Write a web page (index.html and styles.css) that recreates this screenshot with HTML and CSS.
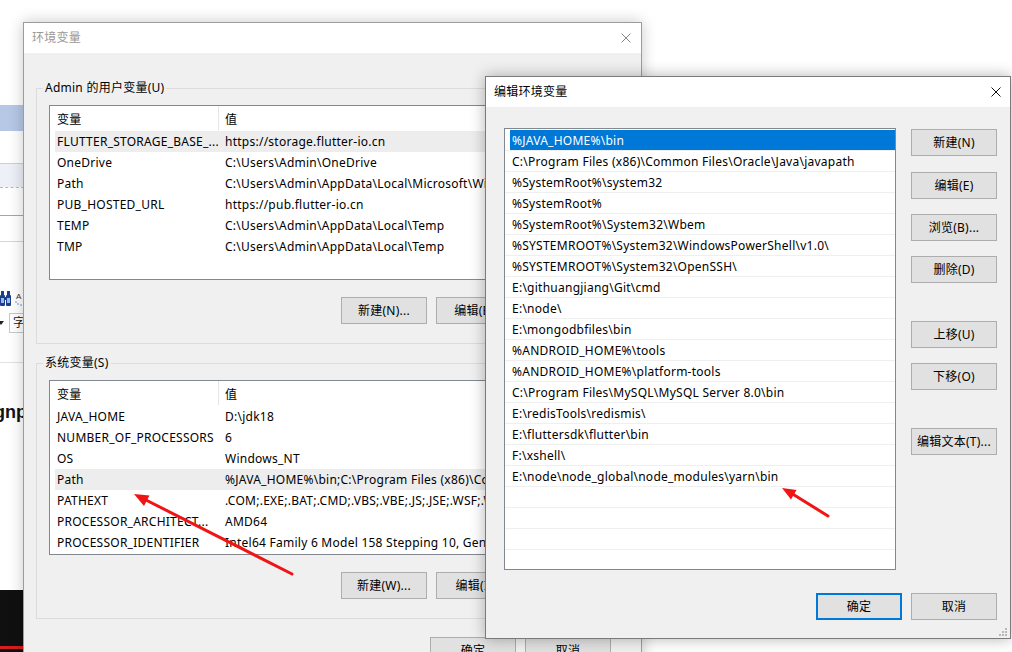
FILE: index.html
```html
<!DOCTYPE html>
<html lang="zh-CN">
<head>
<meta charset="utf-8">
<title>环境变量</title>
<link rel="stylesheet" href="styles.css">
</head>
<body>
<div class="desktop">

  <div class="bgapp">
    <div class="bg-sel"></div>
    <div class="bg-line1"></div>
    <div class="bg-pale"></div>
    <div class="bg-dash"></div>
    <div class="bg-line2"></div>
    <div class="bg-line3"></div>
    <div class="bg-tools">
      <svg width="24" height="16" viewBox="0 0 24 16">
        <rect x="0" y="4" width="5" height="11" rx="1" fill="#1c3f8c"/>
        <rect x="6" y="4" width="5" height="11" rx="1" fill="#1c3f8c"/>
        <rect x="1" y="7" width="3" height="5" fill="#9bb8ea"/>
        <rect x="7" y="7" width="3" height="5" fill="#9bb8ea"/>
        <rect x="1" y="0" width="3" height="5" fill="#1c3f8c"/>
        <rect x="7" y="0" width="3" height="5" fill="#1c3f8c"/>
        <rect x="4" y="6" width="3" height="3" fill="#1c3f8c"/>
        <text x="16" y="8" font-size="8" fill="#333" font-family="Liberation Sans, sans-serif">A</text>
        <circle cx="16" cy="11" r="0.7" fill="#3a6fd8"/>
        <circle cx="18" cy="13" r="0.7" fill="#3a6fd8"/>
        <circle cx="21" cy="14" r="0.7" fill="#3a6fd8"/>
      </svg>
    </div>
    <div class="bg-combo">
      <span class="bg-caret"></span>
      <span class="bg-box">字</span>
    </div>
    <div class="bg-line4"></div>
    <div class="bg-bold">gnpm</div>
    <div class="bg-black"></div>
  </div>

  <div class="dlg dlg-env">
    <div class="titlebar">
      <span class="title-text">环境变量</span>
      <svg class="close" width="10" height="10" viewBox="0 0 10 10"><path d="M0.5 0.5 L9.5 9.5 M9.5 0.5 L0.5 9.5" stroke="#888" stroke-width="1" fill="none"/></svg>
    </div>
    <div class="env-body">
      <fieldset class="gb">
        <legend>Admin 的用户变量(U)</legend>
        <div class="gb-inner">
          <div class="lv">
            <div class="lv-head"><span class="h1">变量</span><span class="h2">值</span></div>
            <div class="lv-rows">
              <div class="lv-row hl"><span class="c1">FLUTTER_STORAGE_BASE_...</span><span class="c2">https://storage.flutter-io.cn</span></div>
              <div class="lv-row"><span class="c1">OneDrive</span><span class="c2">C:\Users\Admin\OneDrive</span></div>
              <div class="lv-row"><span class="c1">Path</span><span class="c2">C:\Users\Admin\AppData\Local\Microsoft\WindowsApps;</span></div>
              <div class="lv-row"><span class="c1">PUB_HOSTED_URL</span><span class="c2">https://pub.flutter-io.cn</span></div>
              <div class="lv-row"><span class="c1">TEMP</span><span class="c2">C:\Users\Admin\AppData\Local\Temp</span></div>
              <div class="lv-row"><span class="c1">TMP</span><span class="c2">C:\Users\Admin\AppData\Local\Temp</span></div>
            </div>
          </div>
          <div class="btn-row">
            <button class="btn">新建(N)...</button>
            <button class="btn">编辑(E)...</button>
            <button class="btn">删除(D)</button>
          </div>
        </div>
      </fieldset>

      <fieldset class="gb gb2">
        <legend>系统变量(S)</legend>
        <div class="gb-inner">
          <div class="lv">
            <div class="lv-head"><span class="h1">变量</span><span class="h2">值</span></div>
            <div class="lv-rows">
              <div class="lv-row"><span class="c1">JAVA_HOME</span><span class="c2">D:\jdk18</span></div>
              <div class="lv-row"><span class="c1">NUMBER_OF_PROCESSORS</span><span class="c2">6</span></div>
              <div class="lv-row"><span class="c1">OS</span><span class="c2">Windows_NT</span></div>
              <div class="lv-row hl"><span class="c1">Path</span><span class="c2">%JAVA_HOME%\bin;C:\Program Files (x86)\Common Files\Oracle\Java\javapath;</span></div>
              <div class="lv-row"><span class="c1">PATHEXT</span><span class="c2">.COM;.EXE;.BAT;.CMD;.VBS;.VBE;.JS;.JSE;.WSF;.WSH;.MSC</span></div>
              <div class="lv-row"><span class="c1">PROCESSOR_ARCHITECT...</span><span class="c2">AMD64</span></div>
              <div class="lv-row"><span class="c1">PROCESSOR_IDENTIFIER</span><span class="c2">Intel64 Family 6 Model 158 Stepping 10, GenuineIntel</span></div>
            </div>
          </div>
          <div class="btn-row">
            <button class="btn">新建(W)...</button>
            <button class="btn">编辑(I)...</button>
            <button class="btn">删除(L)</button>
          </div>
        </div>
      </fieldset>

      <div class="env-foot">
        <button class="btn">确定</button>
        <button class="btn">取消</button>
      </div>
    </div>
  </div>

  <div class="dlg dlg-edit">
    <div class="titlebar">
      <span class="title-text active">编辑环境变量</span>
      <svg class="close close-r" width="10" height="10" viewBox="0 0 10 10"><path d="M0.5 0.5 L9.5 9.5 M9.5 0.5 L0.5 9.5" stroke="#111" stroke-width="1" fill="none"/></svg>
    </div>
    <div class="edit-body">
      <div class="edit-main">
        <div class="elist">
          <div class="er sel"><span class="t">%JAVA_HOME%\bin</span></div>
          <div class="er"><span class="t">C:\Program Files (x86)\Common Files\Oracle\Java\javapath</span></div>
          <div class="er"><span class="t">%SystemRoot%\system32</span></div>
          <div class="er"><span class="t">%SystemRoot%</span></div>
          <div class="er"><span class="t">%SystemRoot%\System32\Wbem</span></div>
          <div class="er"><span class="t">%SYSTEMROOT%\System32\WindowsPowerShell\v1.0\</span></div>
          <div class="er"><span class="t">%SYSTEMROOT%\System32\OpenSSH\</span></div>
          <div class="er"><span class="t">E:\githuangjiang\Git\cmd</span></div>
          <div class="er"><span class="t">E:\node\</span></div>
          <div class="er"><span class="t">E:\mongodbfiles\bin</span></div>
          <div class="er"><span class="t">%ANDROID_HOME%\tools</span></div>
          <div class="er"><span class="t">%ANDROID_HOME%\platform-tools</span></div>
          <div class="er"><span class="t">C:\Program Files\MySQL\MySQL Server 8.0\bin</span></div>
          <div class="er"><span class="t">E:\redisTools\redismis\</span></div>
          <div class="er"><span class="t">E:\fluttersdk\flutter\bin</span></div>
          <div class="er"><span class="t">F:\xshell\</span></div>
          <div class="er"><span class="t">E:\node\node_global\node_modules\yarn\bin</span></div>
          <div class="er"><span class="t"></span></div>
          <div class="er"><span class="t"></span></div>
          <div class="er"><span class="t"></span></div>
          <div class="er"><span class="t"></span></div>
        </div>
        <div class="ebtns">
          <button class="btn first">新建(N)</button>
          <button class="btn gap-m">编辑(E)</button>
          <button class="btn gap-s">浏览(B)...</button>
          <button class="btn gap-s">删除(D)</button>
          <button class="btn gap-l">上移(U)</button>
          <button class="btn gap-s">下移(O)</button>
          <button class="btn gap-l">编辑文本(T)...</button>
        </div>
      </div>
      <div class="edit-foot">
        <button class="btn default">确定</button>
        <button class="btn">取消</button>
      </div>
    </div>
    <svg class="grip" width="10" height="9" viewBox="0 0 10 9">
      <rect x="7" y="0" width="2" height="2" fill="#b8b8b8"/>
      <rect x="4" y="3" width="2" height="2" fill="#b8b8b8"/>
      <rect x="7" y="3" width="2" height="2" fill="#b8b8b8"/>
      <rect x="1" y="6" width="2" height="2" fill="#b8b8b8"/>
      <rect x="4" y="6" width="2" height="2" fill="#b8b8b8"/>
      <rect x="7" y="6" width="2" height="2" fill="#b8b8b8"/>
    </svg>
  </div>

  <svg class="arrows" width="1012" height="652" viewBox="0 0 1012 652">
    <line x1="292" y1="574" x2="144" y2="499" stroke="#f01414" stroke-width="3" stroke-linecap="round"/>
    <polygon points="134,494 149.5,495.5 144,506" fill="#f01414"/>
    <line x1="828" y1="516" x2="791" y2="493" stroke="#f01414" stroke-width="3" stroke-linecap="round"/>
    <polygon points="782,488 796.5,490 791,499.5" fill="#f01414"/>
  </svg>
</div>
</body>
</html>
```

FILE: styles.css
```css
html, body {
  margin: 0;
  padding: 0;
  background: #fff;
}
body {
  font-family: "Noto Sans", "Noto Sans CJK SC", sans-serif;
  font-size: 12px;
  letter-spacing: 0.25px;
  color: #000;
}
.desktop {
  position: relative;
  width: 1012px;
  height: 652px;
  overflow: hidden;
  background: #fff;
}

/* background application strip on the left */
.bgapp {
  position: absolute;
  left: 0;
  top: 0;
  width: 40px;
  height: 652px;
  background: #fff;
  display: flex;
  flex-direction: column;
  overflow: hidden;
  letter-spacing: 0;
}
.bg-sel { margin-top: 105px; height: 26px; background: #b6c8e6; flex: none; }
.bg-line1 { margin-top: 32px; height: 1px; background: #cfcfcf; flex: none; }
.bg-pale { height: 23px; background: #edf0f6; flex: none; }
.bg-dash { height: 0; border-top: 1px dashed #b8b8b8; flex: none; }
.bg-line2 { margin-top: 27px; height: 1px; background: #a6a6a6; flex: none; }
.bg-line3 { margin-top: 25px; height: 1px; background: #d6d6d6; flex: none; }
.bg-tools { margin-top: 49px; height: 16px; flex: none; display: flex; }
.bg-combo { margin-top: 6px; height: 20px; flex: none; display: flex; align-items: center; }
.bg-caret {
  width: 0; height: 0;
  border-left: 3px solid transparent;
  border-right: 3px solid transparent;
  border-top: 4px solid #222;
  margin-left: -2px;
}
.bg-box {
  margin-left: 5px;
  height: 18px;
  border: 1px solid #c8c8c8;
  padding: 0 6px 0 3px;
  line-height: 18px;
  font-size: 12px;
  color: #222;
}
.bg-line4 { margin-top: 29px; height: 1px; background: #e2e2e2; flex: none; }
.bg-bold {
  margin-top: 38px;
  margin-left: -6px;
  font-weight: bold;
  font-size: 18px;
  line-height: 22px;
  font-family: "Liberation Sans", sans-serif;
  color: #111;
  flex: none;
}
.bg-black {
  margin-top: auto;
  height: 62px;
  flex: none;
  background: linear-gradient(to bottom, #101010 0, #101010 56px, #d81e1e 56px, #d81e1e 59px, #101010 59px);
}

/* dialogs */
.dlg {
  position: absolute;
  box-sizing: border-box;
  background: #f0f0f0;
  display: flex;
  flex-direction: column;
}
.dlg-env {
  left: 23px;
  top: 22px;
  width: 619px;
  height: 660px;
  border: 1px solid #9c9c9c;
  box-shadow: 0 0 14px rgba(0, 0, 0, 0.22);
}
.dlg-edit {
  left: 485px;
  top: 76px;
  width: 526px;
  height: 563px;
  border: 1px solid #7a7a7a;
  box-shadow: 0 0 14px rgba(0, 0, 0, 0.3);
}
.titlebar {
  flex: none;
  height: 30px;
  background: #fff;
  display: flex;
  align-items: center;
  padding-left: 8px;
}
.title-text {
  flex: 1;
  color: #999;
  line-height: 16px;
}
.title-text.active { color: #000; }
.close { margin-right: 10px; flex: none; }
.close-r { margin-right: 9px; }

.btn {
  box-sizing: border-box;
  width: 86px;
  height: 27px;
  margin: 0;
  padding: 1px 0 0 0;
  background: #e1e1e1;
  border: 1px solid #adadad;
  font-family: inherit;
  font-size: 12px;
  letter-spacing: 0.25px;
  color: #000;
  line-height: 16px;
  flex: none;
}
.btn.default { border: 2px solid #0078d7; }

/* environment dialog body */
.env-body {
  padding: 27px 11px 0 12px;
  display: flex;
  flex-direction: column;
}
.gb {
  margin: 0;
  padding: 0;
  border: 1px solid #dcdcdc;
  min-width: 0;
}
.gb legend {
  margin-left: 6px;
  padding: 0 2px;
  line-height: 16px;
  font-size: 12px;
}
.gb2 { margin-top: 11px; }
.gb-inner {
  padding: 9px 12px 19px 12px;
}
.lv {
  box-sizing: border-box;
  height: 175px;
  border: 1px solid #828790;
  background: #fff;
  overflow: hidden;
}
.lv-head {
  display: flex;
  height: 24px;
}
.lv-head .h1 {
  box-sizing: border-box;
  width: 169px;
  padding-left: 7px;
  padding-top: 1px;
  border-right: 1px solid #e5e5e5;
  display: flex;
  align-items: center;
}
.lv-head .h2 {
  padding-left: 6px;
  padding-top: 1px;
  display: flex;
  align-items: center;
}
.lv-rows { padding-top: 1px; }
.lv-row {
  box-sizing: border-box;
  display: flex;
  height: 21px;
  line-height: 20px;
  padding-top: 1px;
  margin: 0 5px;
  white-space: nowrap;
  overflow: hidden;
}
.lv-row.hl { background: #ededed; }
.lv-row .c1 {
  box-sizing: border-box;
  width: 163px;
  padding-left: 2px;
  flex: none;
  overflow: hidden;
}
.lv-row .c2 { padding-left: 7px; }
.btn-row {
  margin-top: 17px;
  display: flex;
  justify-content: flex-end;
  gap: 9px;
}
.env-foot {
  margin-top: 18px;
  display: flex;
  justify-content: flex-end;
  gap: 9px;
  padding-right: 19px;
}

/* edit dialog body */
.edit-body {
  flex: 1;
  display: flex;
  flex-direction: column;
  padding: 21px 13px 0 18px;
}
.edit-main {
  display: flex;
  gap: 15px;
}
.elist {
  box-sizing: border-box;
  width: 392px;
  height: 442px;
  border: 1px solid #828790;
  background: #fff;
  padding-top: 1px;
  overflow: hidden;
  flex: none;
}
.er {
  box-sizing: border-box;
  height: 21px;
  border-bottom: 1px solid #efefef;
  padding-left: 5px;
  white-space: nowrap;
  overflow: hidden;
}
.er .t {
  box-sizing: border-box;
  display: block;
  height: 20px;
  line-height: 19px;
  padding-top: 1px;
  padding-left: 2px;
}
.er.sel .t {
  background: #0078d7;
  color: #fff;
}
.ebtns {
  display: flex;
  flex-direction: column;
}
.ebtns .first { margin-top: 1px; }
.ebtns .gap-m { margin-top: 16px; }
.ebtns .gap-s { margin-top: 15px; }
.ebtns .gap-l { margin-top: 38px; }
.edit-foot {
  margin-top: 23px;
  display: flex;
  justify-content: flex-end;
  gap: 9px;
}
.grip {
  position: absolute;
  right: 2px;
  bottom: 1px;
}

.arrows {
  position: absolute;
  left: 0;
  top: 0;
  pointer-events: none;
}
```
